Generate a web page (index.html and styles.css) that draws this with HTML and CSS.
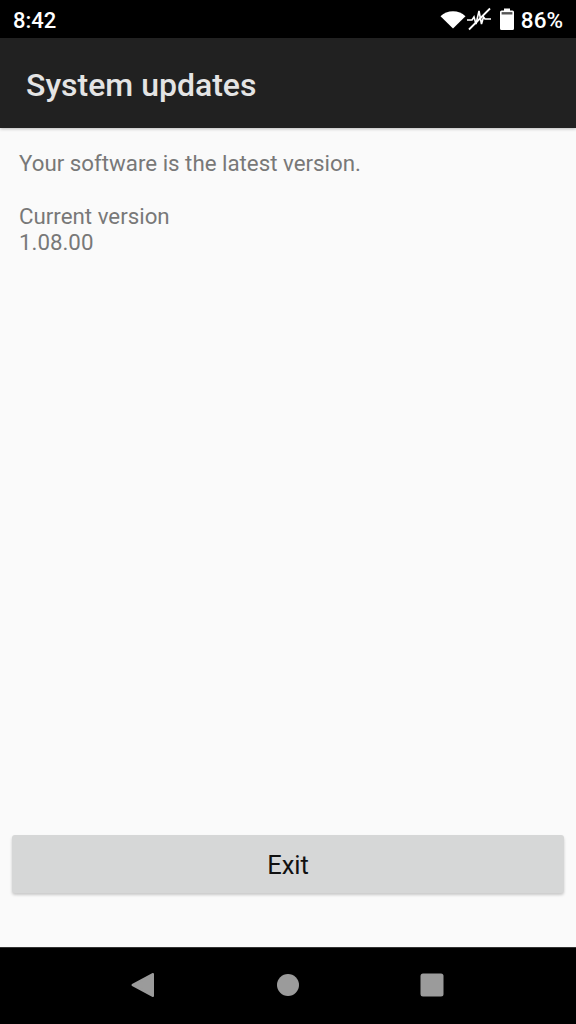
FILE: index.html
```html
<!DOCTYPE html>
<html lang="en">

<head>
    <meta charset="UTF-8">
    <meta name="viewport" content="width=device-width, initial-scale=1.0">
    <title>System updates</title>
    <link rel="stylesheet" href="styles.css">
</head>

<body>
    <div class="status-bar">
        <span class="status-time">8:42</span>
        <div class="status-icons">
            <svg class="icon-wifi" width="26" height="19" viewBox="0 0 26 19">
                <path fill="#fff" d="M0.5 6.2C4 3 8.2 1.2 13 1.2s9 1.8 12.5 5L13 18.6z" />
            </svg>
            <svg class="icon-signal" width="25" height="24" viewBox="0 0 25 24">
                <path fill="none" stroke="#fff" stroke-width="1.6" d="M0 13h5l2-3 2 7 3-13 2.500 13 2-7 1.500 2h6" />
                <path fill="none" stroke="#fff" stroke-width="1.8" d="M2 22.500 23 1.500" />
            </svg>
            <svg class="icon-battery" width="14" height="22" viewBox="0 0 14 22">
                <path fill="#fff" d="M4 0.5h6v2h2.5q1.5 0 1.5 1.5v16.5q0 1.5-1.5 1.5h-11q-1.5 0-1.5-1.5V4q0-1.500 1.500-1.500H4z" />
                <rect x="1.600" y="4.100" width="10.800" height="2.400" fill="#555" />
            </svg>
            <span class="status-percent">86%</span>
        </div>
    </div>

    <header class="app-bar">
        <h1>System updates</h1>
    </header>

    <main class="content">
        <p class="update-msg">Your software is the latest version.</p>
        <p class="version-label">Current version</p>
        <p class="version-num">1.08.00</p>
    </main>

    <div class="button-row">
        <button class="exit-btn">Exit</button>
    </div>

    <nav class="nav-bar">
        <svg width="25" height="26" viewBox="0 0 25 26">
            <path fill="#9b9b9b" stroke="#9b9b9b" stroke-width="2" stroke-linejoin="round" d="M22 2v22L1.500 13z" />
        </svg>
        <svg width="24" height="24" viewBox="0 0 24 24">
            <circle cx="12" cy="12" r="11" fill="#9b9b9b" />
        </svg>
        <svg width="24" height="24" viewBox="0 0 24 24">
            <rect x="0.500" y="0.500" width="23" height="23" rx="2.500" fill="#9b9b9b" />
        </svg>
    </nav>
</body>

</html>
```

FILE: styles.css
```css
* {
    margin: 0;
    padding: 0;
    box-sizing: border-box;
    font-family: Roboto, "Liberation Sans", sans-serif;
}

body {
    width: 576px;
    height: 1024px;
    background: #fafafa;
    display: flex;
    flex-direction: column;
    overflow: hidden;
}

.status-bar {
    height: 38px;
    background: #000;
    color: #fff;
    display: flex;
    align-items: center;
    justify-content: space-between;
    padding: 2px 13px 0;
    font-size: 22px;
    font-weight: 500;
}

.status-icons {
    display: flex;
    align-items: center;
    margin-top: -2px;
}

.status-percent {
    font-size: 22.5px;
    margin-top: 2px;
}

.icon-wifi {
    margin-right: 1px;
}

.icon-battery {
    margin-left: 8px;
    margin-right: 7px;
}

.app-bar {
    height: 90px;
    background: #212121;
    display: flex;
    align-items: center;
    padding: 4px 0 0 26px;
    box-shadow: 0 1px 3px rgba(0, 0, 0, 0.25);
}

.app-bar h1 {
    font-size: 32px;
    font-weight: 500;
    color: #e4e4e4;
}

.content {
    flex: 1;
    padding: 22px 19px 0;
    font-size: 22.3px;
    line-height: 26px;
    color: #787878;
}

.update-msg {
    margin-bottom: 27px;
}

.button-row {
    padding: 0 12px 54px;
}

.exit-btn {
    width: 100%;
    height: 58px;
    border: none;
    border-radius: 3px;
    padding-top: 2px;
    background: #d6d7d7;
    color: #111;
    font-size: 25.5px;
    box-shadow: 0 2px 3px rgba(0, 0, 0, 0.2);
}

.nav-bar {
    height: 77px;
    background: #000;
    border-top: 1px solid #333;
    display: flex;
    align-items: center;
    justify-content: center;
    gap: 120px;
    padding: 0 1px 2px 0;
}
```
